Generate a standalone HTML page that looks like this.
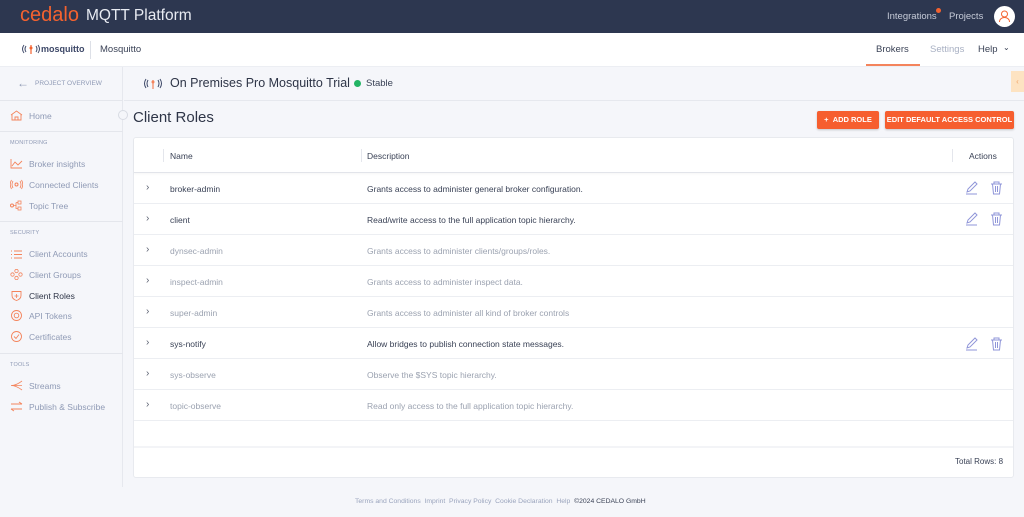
<!DOCTYPE html>
<html><head><meta charset="utf-8"><style>
*{box-sizing:border-box;margin:0;padding:0}
body{width:1024px;height:517px;overflow:hidden;font-family:"Liberation Sans",sans-serif;background:#f5f6fa;position:relative;color:#3a4256}
.top{position:absolute;left:0;top:0;width:1024px;height:33px;background:#2d3750}
.sub{position:absolute;left:0;top:33px;width:1024px;height:34px;background:#fff;border-bottom:1px solid #eceef3}
.side{position:absolute;left:0;top:67px;width:123px;height:420px;border-right:1px solid #e6e8ee;background:#f5f6fa}
.abs{position:absolute}
.nav{position:absolute;left:29px;font-size:8.5px;color:#8f9ab5}
.sec{position:absolute;left:10px;font-size:5.5px;color:#8f9ab5;letter-spacing:.2px}
.ic{position:absolute;left:10px;width:13px;height:11px}
.hr{position:absolute;left:0;width:123px;height:1px;background:#e4e6ec}
.table{position:absolute;left:133px;top:137px;width:881px;height:341px;background:#fff;border:1px solid #e8eaef;border-radius:3px}
.row{position:absolute;left:0;width:879px;height:31px;border-bottom:1px solid #eceef2;font-size:8.5px}
.row span{position:absolute;top:11px}
.row span.ch{left:12px;top:9px;font-size:10px;color:#5a6070}
.btn{position:absolute;top:111px;height:18px;background:#f65e2f;color:#fff;font-size:7.5px;font-weight:600;border-radius:2px;line-height:18px;text-align:center;box-shadow:0 1px 2px rgba(0,0,0,.2)}
.dim{color:#9ba2b0}
</style></head><body>
<div class="top">
 <div class="abs" style="left:20px;top:4px;font-size:20px;color:#f4622f">cedalo</div>
 <div class="abs" style="left:86px;top:7px;font-size:15.5px;color:#e8ebf2">MQTT Platform</div>
 <div class="abs" style="left:887px;top:11px;font-size:9.5px;color:#c6cbd8">Integrations</div>
 <div class="abs" style="left:936px;top:8px;width:5px;height:5px;border-radius:50%;background:#f4622f"></div>
 <div class="abs" style="left:949px;top:11px;font-size:9.5px;color:#c6cbd8">Projects</div>
 <div class="abs" style="left:994px;top:6px;width:21px;height:21px;border-radius:50%;background:#fff">
  <svg width="21" height="21" viewBox="0 0 21 21"><circle cx="10.5" cy="8" r="3" fill="none" stroke="#f4622f" stroke-width="1"/><path d="M5.5 16c0-3 2.5-4.5 5-4.5s5 1.5 5 4.5" fill="none" stroke="#f4622f" stroke-width="1"/></svg></div>
</div>
<div class="sub">
 <svg class="abs" style="left:21px;top:10px" width="20" height="12" viewBox="0 0 20 12"><g fill="none" stroke="#3d4868" stroke-width="1"><path d="M3 2Q0 6 3 10M5 3Q3 6 5 9M17 2Q20 6 17 10M15 3Q17 6 15 9"/></g><path d="M10 2v9" stroke="#f4622f" stroke-width="1.2"/><circle cx="10" cy="5" r="1.5" fill="#f4622f"/></svg>
 <div class="abs" style="left:41px;top:11px;font-size:9px;font-weight:bold;color:#3d4868">mosquitto</div>
 <div class="abs" style="left:90px;top:8px;width:1px;height:18px;background:#dde0e7"></div>
 <div class="abs" style="left:100px;top:11px;font-size:9.5px;color:#3a4256">Mosquitto</div>
 <div class="abs" style="left:876px;top:11px;font-size:9.5px;color:#3a4256">Brokers</div>
 <div class="abs" style="left:866px;top:31px;width:54px;height:2px;background:#f4845c"></div>
 <div class="abs" style="left:930px;top:11px;font-size:9.5px;color:#a8b0c3">Settings</div>
 <div class="abs" style="left:978px;top:11px;font-size:9.5px;color:#3a4256">Help</div>
 <div class="abs" style="left:1003px;top:10px;font-size:8px;color:#3a4256">⌄</div>
</div>
<div class="side">
 <div class="abs" style="left:17px;top:9px;font-size:12px;color:#8f9ab5">←</div>
 <div class="abs" style="left:35px;top:13px;font-size:6.5px;color:#8f9ab5">PROJECT OVERVIEW</div>
 <div class="hr" style="top:33px"></div>
 <svg class="ic" style="top:43px" viewBox="0 0 13 11"><path d="M1 5L6.5 1 12 5M2 4v6h9V4M5 10V7h3v3" fill="none" stroke="#f4845c" stroke-width=".9"/></svg>
 <div class="nav" style="top:44px">Home</div>
 <div class="abs" style="left:118px;top:43px;width:10px;height:10px;border-radius:50%;border:1px solid #d8dbe3;background:#f5f6fa"></div>
 <div class="hr" style="top:64px"></div>
 <div class="sec" style="top:73px">MONITORING</div>
 <svg class="ic" style="top:91px" viewBox="0 0 13 11"><path d="M1 1v9h11M2 8l3-4 3 3 4-4" fill="none" stroke="#f4845c" stroke-width=".9"/></svg>
 <div class="nav" style="top:92px">Broker insights</div>
 <svg class="ic" style="top:112px" viewBox="0 0 13 11"><circle cx="6.5" cy="5.5" r="1.5" fill="none" stroke="#f4845c"/><path d="M3 2Q1 5.5 3 9M10 2Q12 5.5 10 9M1.5 1Q-1 5.5 1.5 10M11.5 1Q14 5.5 11.5 10" fill="none" stroke="#f4845c" stroke-width=".8"/></svg>
 <div class="nav" style="top:113px">Connected Clients</div>
 <svg class="ic" style="top:133px" viewBox="0 0 13 11"><circle cx="2" cy="5.5" r="1.5" fill="none" stroke="#f4845c"/><rect x="8" y="1" width="3" height="3" fill="none" stroke="#f4845c" stroke-width=".8"/><rect x="8" y="7" width="3" height="3" fill="none" stroke="#f4845c" stroke-width=".8"/><path d="M3.5 5.5h3M6 2.5v6h2M6 2.5h2" fill="none" stroke="#f4845c" stroke-width=".8"/></svg>
 <div class="nav" style="top:134px">Topic Tree</div>
 <div class="hr" style="top:154px"></div>
 <div class="sec" style="top:163px">SECURITY</div>
 <svg class="ic" style="top:182px" viewBox="0 0 13 11"><path d="M1 2h1M4 2h8M1 5.5h1M4 5.5h8M1 9h1M4 9h8" stroke="#f4845c" stroke-width=".9"/></svg>
 <div class="nav" style="top:182px">Client Accounts</div>
 <svg class="ic" style="top:202px" viewBox="0 0 13 11"><g fill="none" stroke="#f4845c" stroke-width=".8"><circle cx="6.5" cy="2" r="1.7"/><circle cx="6.5" cy="9" r="1.7"/><circle cx="2.5" cy="5.5" r="1.7"/><circle cx="10.5" cy="5.5" r="1.7"/></g></svg>
 <div class="nav" style="top:203px">Client Groups</div>
 <svg class="ic" style="top:223px" viewBox="0 0 13 11"><path d="M2 1.5h9v4Q11 9 6.5 10.5 2 9 2 5.5z" fill="none" stroke="#f4845c" stroke-width=".9"/><path d="M6.5 4v4M4.5 6h4" stroke="#f4845c" stroke-width=".8"/></svg>
 <div class="nav" style="top:224px;color:#2e3547">Client Roles</div>
 <svg class="ic" style="top:243px" viewBox="0 0 13 11"><circle cx="6.5" cy="5.5" r="5" fill="none" stroke="#f4845c" stroke-width=".9"/><circle cx="6.5" cy="5.5" r="2.3" fill="none" stroke="#f4845c" stroke-width=".9"/></svg>
 <div class="nav" style="top:244px">API Tokens</div>
 <svg class="ic" style="top:264px" viewBox="0 0 13 11"><circle cx="6.5" cy="5.5" r="5" fill="none" stroke="#f4845c" stroke-width=".9"/><path d="M4 5.5l2 2 3-4" fill="none" stroke="#f4845c" stroke-width=".9"/></svg>
 <div class="nav" style="top:265px">Certificates</div>
 <div class="hr" style="top:286px"></div>
 <div class="sec" style="top:295px">TOOLS</div>
 <svg class="ic" style="top:313px" viewBox="0 0 13 11"><path d="M1 5.5h11M1 5.5Q6 5.5 12 1M1 5.5Q6 5.5 12 10" fill="none" stroke="#f4845c" stroke-width=".8"/></svg>
 <div class="nav" style="top:314px">Streams</div>
 <svg class="ic" style="top:334px" viewBox="0 0 13 11"><path d="M1 3h11M9 1l3 2M12 8H1M4 10L1 8" fill="none" stroke="#f4845c" stroke-width=".9"/></svg>
 <div class="nav" style="top:335px">Publish &amp; Subscribe</div>
</div>
<div class="abs" style="left:124px;top:100px;width:900px;height:1px;background:#e6e8ee"></div>
<svg class="abs" style="left:143px;top:77px" width="20" height="13" viewBox="0 0 20 13"><g fill="none" stroke="#3d4868" stroke-width="1"><path d="M3 2Q0 6.5 3 11M5 3Q3 6.5 5 10M17 2Q20 6.5 17 11M15 3Q17 6.5 15 10"/></g><path d="M10 3v9" stroke="#f4845c" stroke-width="1.2"/><circle cx="10" cy="5" r="1.5" fill="#f4845c"/></svg>
<div class="abs" style="left:170px;top:76px;font-size:12.5px;color:#2e3547">On Premises Pro Mosquitto Trial</div>
<div class="abs" style="left:354px;top:80px;width:7px;height:7px;border-radius:50%;background:#22b464"></div>
<div class="abs" style="left:366px;top:78px;font-size:9.5px;color:#3a4256">Stable</div>
<div class="abs" style="left:1011px;top:71px;width:13px;height:21px;background:#fde3c2;color:#f1a76b;font-size:8px;text-align:center;line-height:21px">‹</div>
<div class="abs" style="left:133px;top:109px;font-size:15px;color:#2e3547">Client Roles</div>
<div class="btn" style="left:817px;width:62px">+&nbsp;&nbsp;ADD ROLE</div>
<div class="btn" style="left:885px;width:129px">EDIT DEFAULT ACCESS CONTROL</div>
<div class="table">
 <div class="row" style="top:0;height:35px;border-bottom:1px solid #e2e4ea;box-shadow:0 1px 2px rgba(0,0,0,.04)">
  <div class="abs" style="left:29px;top:11px;width:1px;height:13px;background:#e4e6ec"></div>
  <span style="left:36px;top:13px;color:#3a4256">Name</span>
  <div class="abs" style="left:227px;top:11px;width:1px;height:13px;background:#e4e6ec"></div>
  <span style="left:233px;top:13px">Description</span>
  <div class="abs" style="left:818px;top:11px;width:1px;height:13px;background:#e4e6ec"></div>
  <span style="left:835px;top:13px">Actions</span>
 </div>
 <div class="row" style="top:35px"><span class="ch">›</span><span style="left:36px">broker-admin</span><span style="left:233px">Grants access to administer general broker configuration.</span></div>
 <div class="row" style="top:66px"><span class="ch">›</span><span style="left:36px">client</span><span style="left:233px">Read/write access to the full application topic hierarchy.</span></div>
 <div class="row dim" style="top:97px"><span class="ch">›</span><span style="left:36px">dynsec-admin</span><span style="left:233px">Grants access to administer clients/groups/roles.</span></div>
 <div class="row dim" style="top:128px"><span class="ch">›</span><span style="left:36px">inspect-admin</span><span style="left:233px">Grants access to administer inspect data.</span></div>
 <div class="row dim" style="top:159px"><span class="ch">›</span><span style="left:36px">super-admin</span><span style="left:233px">Grants access to administer all kind of broker controls</span></div>
 <div class="row" style="top:190px"><span class="ch">›</span><span style="left:36px">sys-notify</span><span style="left:233px">Allow bridges to publish connection state messages.</span></div>
 <div class="row dim" style="top:221px"><span class="ch">›</span><span style="left:36px">sys-observe</span><span style="left:233px">Observe the $SYS topic hierarchy.</span></div>
 <div class="row dim" style="top:252px"><span class="ch">›</span><span style="left:36px">topic-observe</span><span style="left:233px">Read only access to the full application topic hierarchy.</span></div>
 <div class="abs" style="left:0;top:308px;width:879px;height:2px;background:#f3f4f7"></div>
 <div class="abs" style="left:821px;top:319px;font-size:8px;color:#3a4256">Total Rows: 8</div>
</div>
<svg class="abs" style="left:965px;top:181px" width="40" height="14" viewBox="0 0 40 14"><g fill="none" stroke="#8f95d8" stroke-width="1"><path d="M2 11l1-3 7-7 2 2-7 7zM1 13h11"/><path d="M26 3h11M29 3V1h5v2M27.5 3l1 10h6l1-10M30.5 5v6M32.5 5v6"/></g></svg>
<svg class="abs" style="left:965px;top:212px" width="40" height="14" viewBox="0 0 40 14"><g fill="none" stroke="#8f95d8" stroke-width="1"><path d="M2 11l1-3 7-7 2 2-7 7zM1 13h11"/><path d="M26 3h11M29 3V1h5v2M27.5 3l1 10h6l1-10M30.5 5v6M32.5 5v6"/></g></svg>
<svg class="abs" style="left:965px;top:337px" width="40" height="14" viewBox="0 0 40 14"><g fill="none" stroke="#8f95d8" stroke-width="1"><path d="M2 11l1-3 7-7 2 2-7 7zM1 13h11"/><path d="M26 3h11M29 3V1h5v2M27.5 3l1 10h6l1-10M30.5 5v6M32.5 5v6"/></g></svg>
<div class="abs" style="left:355px;top:498px;font-size:6.8px;color:#9aa4bd;white-space:nowrap">Terms and Conditions&nbsp; Imprint&nbsp; Privacy Policy&nbsp; Cookie Declaration&nbsp; Help&nbsp; <span style="color:#3a4256">©2024 CEDALO GmbH</span></div>
</body></html>
